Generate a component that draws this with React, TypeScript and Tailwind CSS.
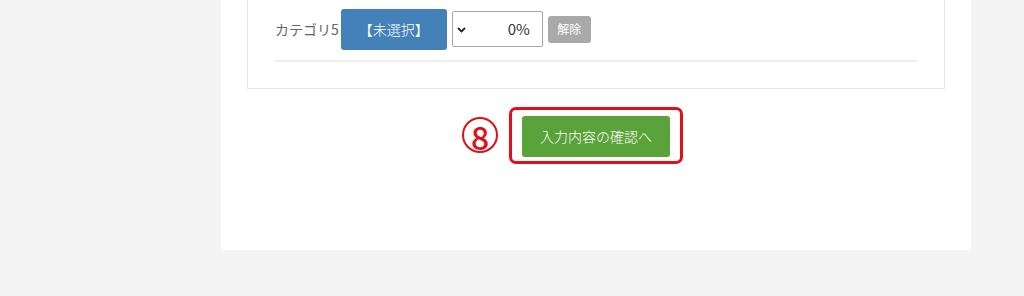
export default function App() {
  const font = { fontFamily: '"Noto Sans CJK JP", "Noto Sans", sans-serif' };
  return (
    <div className="w-[1024px] h-[296px] bg-[#f4f4f4] overflow-hidden" style={font}>
      <div className="ml-[221px] w-[750px] h-[250px] bg-white px-[26px]">
        <div className="h-[89px] border border-t-0 border-[#e6e6e6] px-[27px]">
          <div className="flex items-center h-[58px]">
            <span className="text-[14px] text-[#666] mr-[2px] leading-none">カテゴリ5</span>
            <button className="w-[106px] h-[41px] rounded-[3px] bg-[#4581b9] text-white text-[14px] font-light">
              【未選択】
            </button>
            <div className="ml-[5px] w-[91px] h-[36px] border border-[#a6a6a6] rounded-[2px] flex items-center px-[4px]">
              <svg width="9" height="6" viewBox="0 0 9 6" className="mt-[2px]">
                <path d="M1 1 L4.5 4.5 L8 1" fill="none" stroke="#222" strokeWidth="1.8" />
              </svg>
              <span className="ml-auto mr-[8px] text-[15px] text-[#333]">0%</span>
            </div>
            <button className="ml-[5px] w-[43px] h-[27px] rounded-[3px] bg-[#a9a9a9] text-white text-[12px]">
              解除
            </button>
          </div>
          <div className="mt-[2px] h-[2px] bg-[#eeeeee]" />
        </div>
        <div className="flex justify-center mt-[18px]">
          <div className="relative">
            <div className="absolute left-[-47px] top-[10px] w-[36px] h-[36px] rounded-full border-2 border-[#e0101a] flex items-center justify-center text-[#e0101a] text-[32px] font-medium leading-none">
              <span className="mt-[1px]">8</span>
            </div>
            <div className="border-[3px] border-[#e0101a] rounded-[7px] pt-[6px] pb-[4px] px-[10px]">
              <button className="w-[148px] h-[41px] rounded-[3px] bg-[#5aa23a] text-white text-[14px] font-light">
                入力内容の確認へ
              </button>
            </div>
          </div>
        </div>
      </div>
    </div>
  );
}
